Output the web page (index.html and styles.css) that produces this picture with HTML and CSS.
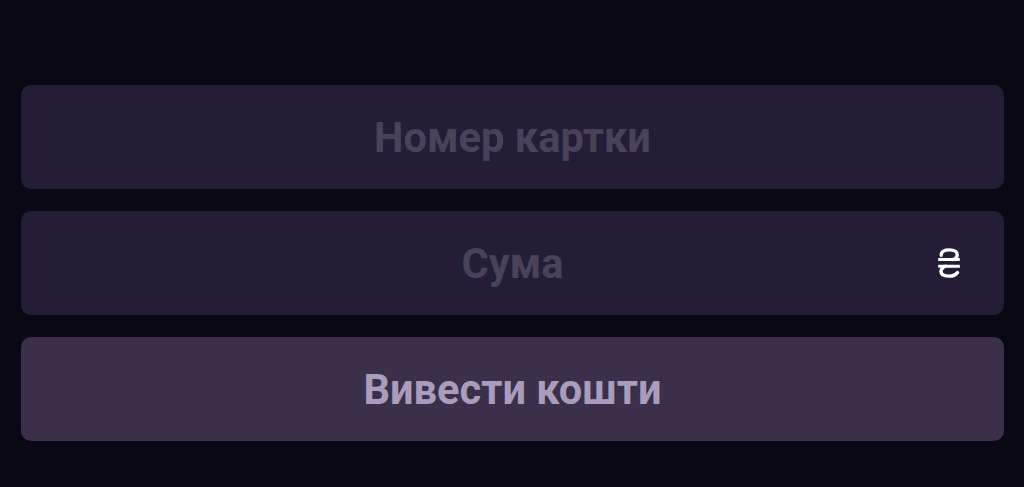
FILE: index.html
```html
<!DOCTYPE html>
<html lang="uk">
<head>
<meta charset="utf-8">
<link rel="stylesheet" href="styles.css">
</head>
<body>
<form class="form">
  <div class="field"><span class="placeholder">Номер картки</span></div>
  <div class="field field-sum"><span class="placeholder">Сума</span><svg class="currency" viewBox="0 0 24 30" width="24" height="30" aria-label="₴"><path d="M4.2 7.2 C4.2 3.4 7.6 1.9 12.2 1.9 C16.8 1.9 20.2 3.6 20.2 6.9 C20.2 9.1 18.4 10.6 15.6 11.6" fill="none" stroke="#fff" stroke-width="3.4" stroke-linecap="round"/><path d="M1.2 11.6 H22.8 M1.2 18.2 H22.8" stroke="#fff" stroke-width="3"/><path d="M8.4 18.2 C5.6 19.4 4 21.1 4 23.6 C4 26.7 7.4 28.1 12 28.1 C15.6 28.1 18.6 27.1 20.5 24.6" fill="none" stroke="#fff" stroke-width="3.4" stroke-linecap="round"/></svg></div>
  <button type="button" class="submit">Вивести кошти</button>
</form>
</body>
</html>
```
FILE: styles.css
```css
html, body {
  margin: 0;
  padding: 0;
  background: #0b0816;
  height: 100%;
}
body {
  font-family: Roboto, "Noto Sans", sans-serif;
}
.form {
  display: flex;
  flex-direction: column;
  gap: 22px;
  padding: 85px 20px 0 21px;
}
.field, .submit {
  position: relative;
  height: 104px;
  border-radius: 10px;
  display: flex;
  align-items: center;
  justify-content: center;
  box-sizing: border-box;
  border: 0;
  margin: 0;
  width: 100%;
  font-family: inherit;
}
.field {
  background: #231d35;
}
.placeholder {
  font-size: 41.6px;
  font-weight: 700;
  color: #4a4259;
}
.currency {
  position: absolute;
  right: 43px;
  top: 50%;
  margin-top: -15.5px;
}
.submit {
  background: #3a3049;
  color: #a99cbd;
  font-size: 41.6px;
  font-weight: 700;
  padding: 0;
}
```
